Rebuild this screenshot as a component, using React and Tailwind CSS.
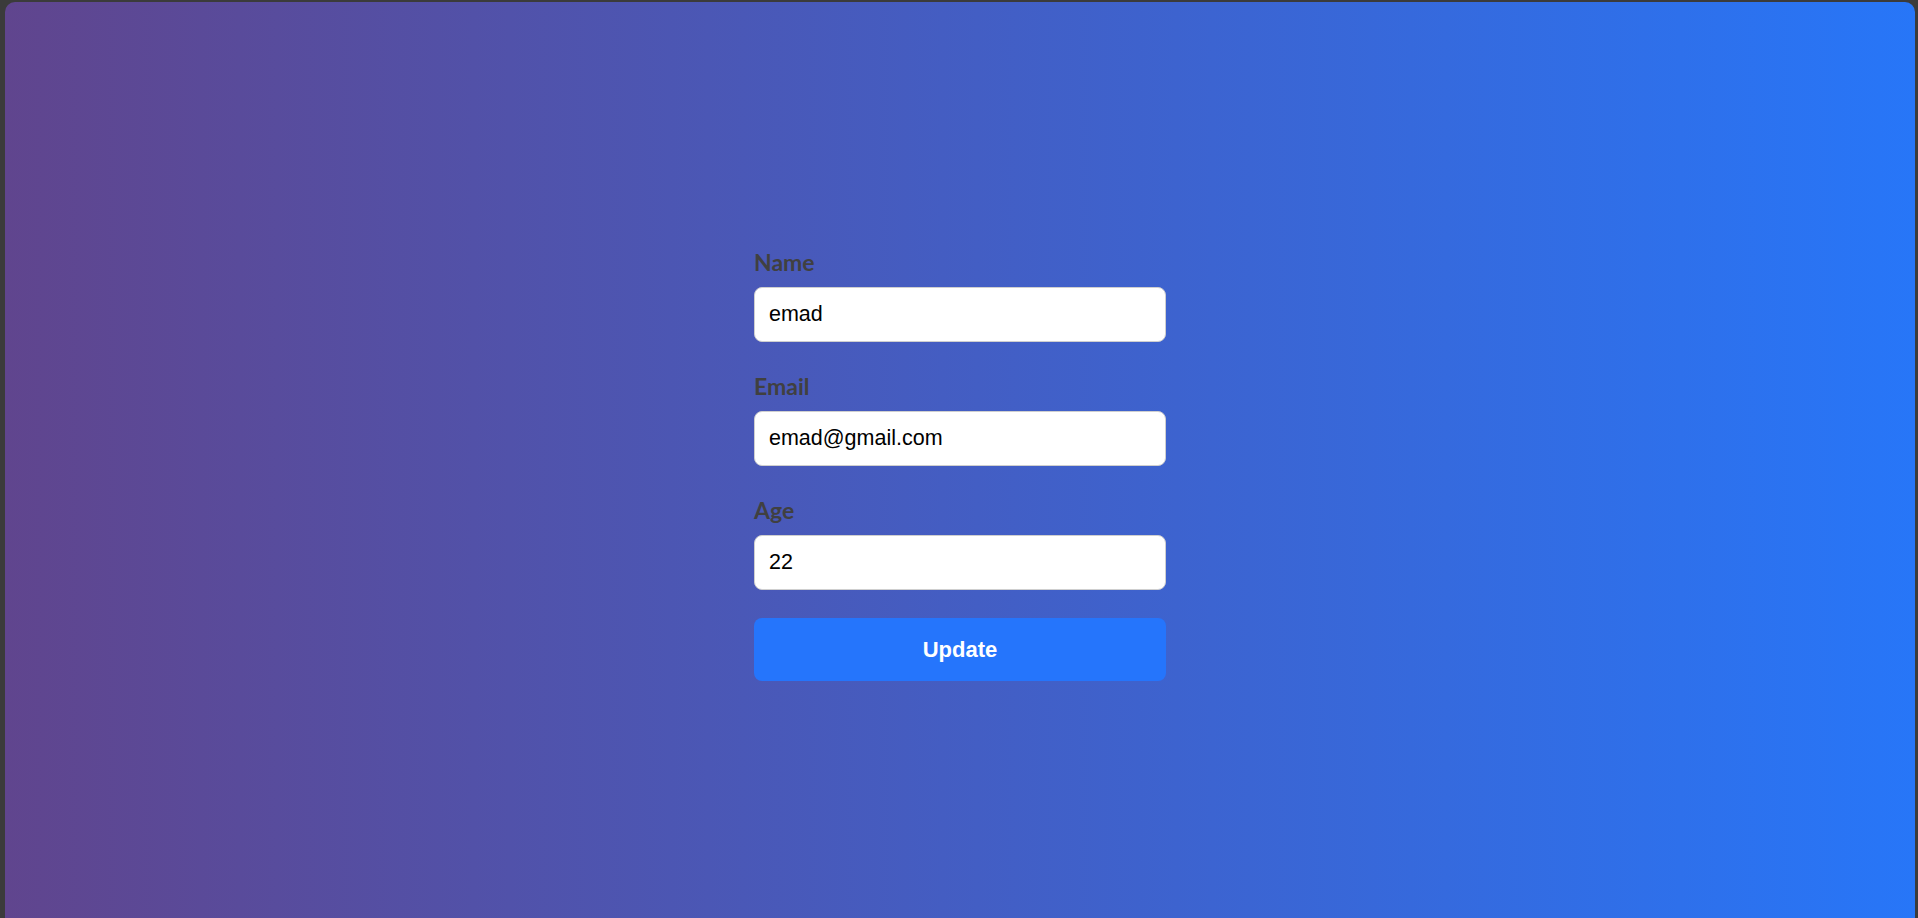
import { useState } from "react"

const Field = ({ label, value, onChange, type = "text", className }) => (
    <div className={className}>
        <label className="block font-['Lato',sans-serif] font-bold text-[23px] leading-[30px] text-[#404040] mb-[10px]">
            {label}
        </label>
        <input
            type={type}
            value={value}
            onChange={e => onChange(e.target.value)}
            className="block w-full h-[55px] px-[14px] pb-[1px] bg-white border border-[#cfcfcf] rounded-[8px] font-['Liberation_Sans',Arial,sans-serif] text-[21.5px] text-black outline-none"
        />
    </div>
)

const App = () => {
    const [name, setName] = useState("emad")
    const [email, setEmail] = useState("emad@gmail.com")
    const [age, setAge] = useState("22")

    return (
        <div className="h-screen bg-[#3b3b3b] pl-[5px] pr-[3px] pt-[2px] overflow-hidden">
            <div className="h-[916px] rounded-t-[10px] bg-[linear-gradient(to_right,#60458e,#2776f8)] flex justify-center pt-[245px]">
                <form className="w-[412px]" onSubmit={e => e.preventDefault()}>
                    <Field className="mb-[29px]" label="Name" value={name} onChange={setName} />
                    <Field className="mb-[29px]" label="Email" value={email} onChange={setEmail} type="email" />
                    <Field className="mb-[28px]" label="Age" value={age} onChange={setAge} />
                    <button
                        type="submit"
                        className="w-full h-[63px] rounded-[8px] bg-[#2575fc] text-white font-['Liberation_Sans',Arial,sans-serif] font-bold text-[22px]"
                    >
                        Update
                    </button>
                </form>
            </div>
        </div>
    )
}

export default App
